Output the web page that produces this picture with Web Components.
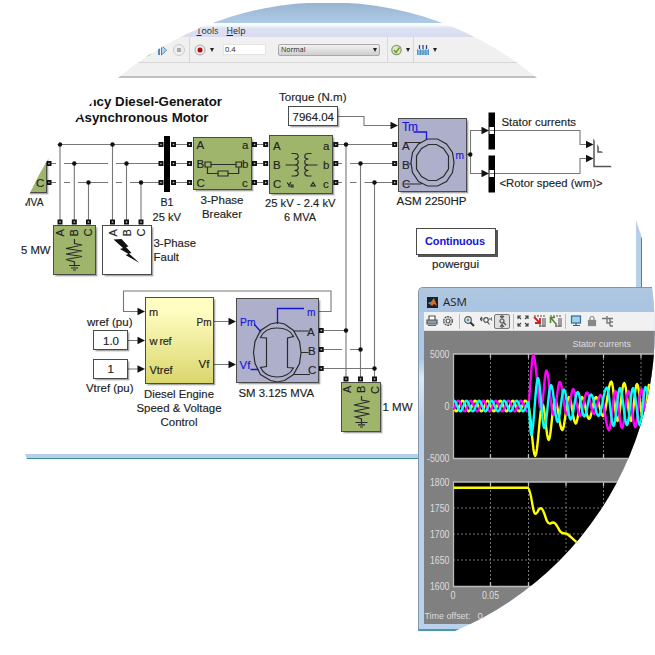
<!DOCTYPE html>
<html lang="en">
<head>
<meta charset="utf-8">
<title>Diesel-Generator model</title>
<style>
html,body{margin:0;background:#fff}
body{width:655px;height:655px;overflow:hidden;font-family:"Liberation Sans",Arial,sans-serif;color:#222}
svg text{font-family:"Liberation Sans",Arial,sans-serif;font-size:11.500px;fill:#222;stroke:#222;stroke-width:.15px}
svg .b{fill:#1616d8;stroke:#1616d8}
svg .bold{font-weight:bold;stroke:none}
svg .s{font-size:11px}
svg .ln{fill:none;stroke:#2b2b2b;stroke-width:1.2}
svg .bl{fill:none;stroke:#1616d8;stroke-width:1.3}
</style>
</head>
<body>
<round-stage>
  <model-window slot="model"></model-window>
  <model-canvas slot="canvas">
    <wire-layer></wire-layer>
    <sim-block x="0" y="132" w="45.5" h="59.5" tone="green"><svg><text x="36" y="187" textLength="7.5">C</text></svg></sim-block>
    <sim-block x="193.5" y="138" w="57" h="51" tone="green"><svg>
      <text x="196" y="149">A</text><text x="196" y="168">B</text><text x="196" y="187">C</text>
      <text x="241.5" y="149">a</text><text x="241.5" y="168">b</text><text x="241.5" y="187">c</text>
      <path class="ln" d="M204.5 162h6v5h-6zM235.5 162h5.5v5h-5.5zM210.500 164.500H235.500M207 167V173.500H217.500M227.500 173.500H238.200V167M217.500 171h10v5h-10z"/></svg></sim-block>
    <sim-block x="269.500" y="135.500" w="62" h="57" tone="green"><svg>
      <text x="272.500" y="149">A</text><text x="272.500" y="168">B</text><text x="272.500" y="187">C</text>
      <text x="322.500" y="149">a</text><text x="322.500" y="168">b</text><text x="322.500" y="187">c</text>
      <path class="ln" d="M291 153H294C299 153 299 158.500 294 158.500C299 158.500 299 164.500 294 164.500C299 164.500 299 170 294 170C299 170 299 175.500 294 175.500H291M285 164.500H294M311 153H308C303 153 303 158.500 308 158.500C303 158.500 303 164.500 308 164.500C303 164.500 303 170 308 170C303 170 303 175.500 308 175.500H311M308 164.500H317"/>
      <path class="ln" d="M286.500 182L288.500 184.500L290.500 181.500M288.500 184.500V186.500M290.500 184.500h2v2h-2zM310.500 185.300L312.600 181.800L314.700 185.300z"/></svg></sim-block>
    <sim-block x="398.500" y="118.500" w="67" h="72" tone="blue"><svg>
      <text x="401.500" y="149">A</text><text x="401.500" y="168">B</text><text x="401.500" y="187">C</text>
      <text class="b" x="401.500" y="130" textLength="16" style="font-size:12px">Tm</text><text class="b" x="455" y="158.500" textLength="8.500" lengthAdjust="spacingAndGlyphs">m</text>
      <path class="bl" d="M413 131.500H426V139.500"/>
      <path class="ln" d="M404 142H420M408 163.500H411M404 183.500H421M427 138.500H437L446 143.500L452 152L453.500 162L452 172L446 181L437 185.500H427L418 181L412 172L410.500 162L412 152L418 143.500ZM428 144H436L443 148L448 155.500V168.500L443 176L436 180H428L421 176L416 168.500V155.500L421 148Z"/></svg></sim-block>
    <sim-block x="288.500" y="106.500" w="48" h="18.500" tone="white"><svg><text x="292" y="120" textLength="41.500">7964.04</text></svg></sim-block>
    <sim-block x="417" y="229" w="78" h="25" tone="white" raised><svg><text class="b bold" x="425" y="245" textLength="60" style="font-size:11px">Continuous</text></svg></sim-block>
    <sim-block x="54" y="225.500" w="40.500" h="48" tone="green"><svg>
      <text class="s" transform="rotate(-90 64 236)" x="64" y="236">A</text><text class="s" transform="rotate(-90 78 236)" x="78" y="236">B</text><text class="s" transform="rotate(-90 92 236)" x="92" y="236">C</text>
      <path class="ln" d="M74.500 238.500V243L82 244.500L66 248L82 250.500L66 253.500L82 256L66 259L74.500 261.500V266M69 265H80M71 267.500H78M73 269.500H76"/></svg></sim-block>
    <sim-block x="102.500" y="225.500" w="48" h="48" tone="white"><svg>
      <text class="s" transform="rotate(-90 116.500 236)" x="116.500" y="236">A</text><text class="s" transform="rotate(-90 130.500 236)" x="130.500" y="236">B</text><text class="s" transform="rotate(-90 144.500 236)" x="144.500" y="236">C</text>
      <path fill="#111" d="M113 239L121 238.500L128 246L125.500 246.500L131 252.500L128.500 253L139 262.500L125 254.500L128 253.500L119.500 248.500L122.500 247.500Z"/></svg></sim-block>
    <sim-block x="341.500" y="383" w="38" h="47.500" tone="green"><svg>
      <text class="s" transform="rotate(-90 350.500 393)" x="350.500" y="393">A</text><text class="s" transform="rotate(-90 364.500 393)" x="364.500" y="393">B</text><text class="s" transform="rotate(-90 378 394)" x="378" y="394">C</text>
      <path class="ln" d="M361 396V400L369 401.500L353.500 405L369 408L353.500 411L369 414L355 417L361 419V424M355 422.500H367M357.500 424.800H364.500M359.500 427H362.500"/></svg></sim-block>
    <sim-block x="145.500" y="297.500" w="67" h="85.500" tone="yellow"><svg>
      <text class="s" x="148.500" y="315.500">m</text><text class="s" x="149" y="344" textLength="22">w ref</text><text class="s" x="149" y="373" textLength="23">Vtref</text>
      <text class="s" x="196" y="325" textLength="15" lengthAdjust="spacingAndGlyphs">Pm</text><text x="198" y="367.500" textLength="11">Vf</text></svg></sim-block>
    <sim-block x="93.500" y="331" w="33.500" h="18" tone="white"><svg><text x="102.500" y="344.500" textLength="16">1.0</text></svg></sim-block>
    <sim-block x="93.500" y="360" w="33.500" h="18" tone="white"><svg><text x="107" y="373">1</text></svg></sim-block>
    <sim-block x="236.500" y="298.500" w="81" h="83.500" tone="blue"><svg>
      <text class="b" x="239.500" y="325.500" textLength="15.500" lengthAdjust="spacingAndGlyphs">Pm</text><text class="b" x="239" y="368">Vf</text><text class="b" x="306.500" y="315.500" textLength="8.500" lengthAdjust="spacingAndGlyphs">m</text>
      <text x="306.500" y="335">A</text><text x="307.500" y="354">B</text><text x="307.500" y="373">C</text>
      <path class="bl" d="M277 323.500V308H303.500M254 324L260.500 331.500M250 369H258"/>
      <path class="ln" d="M293 330.500H308M300.500 352H308M293 374H309.500M270 323.500L277 322L284 323.500L293 330L299 341L300.500 352L299 363L293 374L284 380L277 381.500L270 380L260 374L254.500 363L253 352L254.500 341L260 330ZM260 337Q264 327.500 276.500 327.500Q289 327.500 293 336L287 337.500V367L293 367.500Q288 376.500 276.500 376.500Q264 376 260 367L266 366V337.500Z"/></svg></sim-block>
  </model-canvas>
  <scope-window slot="scope"></scope-window>
</round-stage>

<script>
function shadow(el, html){
  const t=document.createElement('template');
  t.innerHTML=html;
  el.attachShadow({mode:'open'}).append(t.content.cloneNode(true));
}
const TEXT='text{font-family:"Liberation Sans",Arial,sans-serif;font-size:11.700px;fill:#222;stroke:#222;stroke-width:.15px}';

customElements.define('round-stage', class extends HTMLElement{
  connectedCallback(){ if(this.shadowRoot) return; shadow(this,`<style>
    :host{display:grid;grid-template:655px/655px;align-items:start;justify-items:start;width:655px;height:655px;overflow:hidden;clip-path:circle(327.3px at 327.5px 329.5px);background:#fff}
    ::slotted(*){grid-area:1/1}
    </style><slot name="model"></slot><slot name="canvas"></slot><slot name="scope"></slot>`); }
});

customElements.define('drop-arrow', class extends HTMLElement{
  connectedCallback(){ if(this.shadowRoot) return; shadow(this,`<style>:host{display:block;width:0;height:0;border:2.500px solid transparent;border-top:4px solid #222;border-bottom:0}</style>`); }
});

customElements.define('model-toolbar', class extends HTMLElement{
  connectedCallback(){ if(this.shadowRoot) return; shadow(this,`<style>
    :host{display:flex;align-items:center;height:26px;box-sizing:border-box;background:#f0f0f0;border-bottom:1px solid #d6d6d6;padding-left:141px;font:8px "Open Sans",sans-serif;color:#222}
    svg{display:block;flex:none}
    i{width:1px;height:25px;background:#d8d8d8}
    .field{box-sizing:border-box;width:43px;height:11px;background:#fff;border:1px solid #e4e4e4;padding-left:1px;line-height:9px;margin-left:9px;font-size:7.500px}
    .combo{box-sizing:border-box;display:flex;align-items:center;justify-content:space-between;width:102px;height:12px;margin-left:12px;border:1px solid #aaa;border-radius:2px;background:linear-gradient(#f2f2f2,#cfcfcf);padding:0 2px;font-size:7px}
    </style>
    <svg width="48" height="20" viewBox="141 40 48 20">
      <circle cx="146" cy="50.500" r="6" fill="#5fa34b"/><rect x="158" y="45.500" width="2" height="9.500" fill="#558db8"/>
      <path d="M161.500 45.500L166.500 50.200L161.500 55Z" fill="#b5d4ed" stroke="#4c84b0"/>
      <circle cx="179" cy="50" r="5.500" fill="#eee" stroke="#ccc"/><rect x="177" y="48" width="4" height="4" fill="#aaa"/></svg>
    <i></i>
    <svg width="17" height="20" viewBox="190 40 17 20"><circle cx="200" cy="50" r="5" fill="#f5e9e9" stroke="#aaa"/><circle cx="200" cy="50" r="2.500" fill="#b00b0b"/></svg>
    <drop-arrow style="margin-left:3px"></drop-arrow>
    <div class="field">0.4</div>
    <div class="combo"><span>Normal</span><drop-arrow></drop-arrow></div>
    <i style="margin-left:7px"></i>
    <svg width="18" height="20" viewBox="388 40 18 20"><circle cx="396.500" cy="50" r="4.700" fill="#dbe9bf" stroke="#8a9a72" stroke-width="1.300"/><path d="M394 50L396 52.500L399.500 47.500" fill="none" stroke="#6d9c38" stroke-width="1.500"/></svg>
    <drop-arrow></drop-arrow><i style="margin-left:3px"></i>
    <svg width="17" height="20" viewBox="415 40 17 20"><path d="M418.500 50H429.500V55H418.500Z" fill="#7eb6e2"/><path d="M418.500 49V55M421.300 49V55M424 49V55M426.800 49V55M429.500 49V55" stroke="#3f86bd" stroke-width=".8"/><path d="M420.500 45V49M424 45V49M427.500 45V49" stroke="#234b75" stroke-width="1.300"/></svg>
    <drop-arrow style="margin-left:2px"></drop-arrow>`); }
});

customElements.define('model-window', class extends HTMLElement{
  connectedCallback(){ if(this.shadowRoot) return; shadow(this,`<style>
    :host{display:flex;flex-direction:column;box-sizing:border-box;width:640.500px;height:455.500px;margin-top:2.500px}
    .title{height:20px;flex:none;background:linear-gradient(#9ab4d0,#aecbe8)}
    .menu{height:14.500px;flex:none;display:flex;gap:8px;padding-left:174px;background:linear-gradient(#fafcff 2px,#dce2f2 5px,#d9dcf1);font:8.800px/17px "Open Sans",sans-serif;color:#222}
    .menu span{display:block;height:14px}
    u{text-underline-offset:1px}
    .strip{height:13px;flex:none;background:#f0f0f0;border-bottom:2px solid #c0c0c0}
    .page{flex:1;background:#fff;border-right:5px solid #b7cfe8;border-bottom:4px solid #b7cfe8;box-shadow:1px 1px 0 #3c8ca0}
    </style><div class="title"></div><div class="menu"><span>sis</span><span style="margin-left:4px"><u>T</u>ools</span><span><u>H</u>elp</span></div>
    <model-toolbar></model-toolbar><div class="strip"></div><div class="page"></div>`); }
});

customElements.define('model-canvas', class extends HTMLElement{
  connectedCallback(){ if(this.shadowRoot) return; shadow(this,`<style>:host{display:block;position:relative;width:655px;height:655px}</style><slot></slot>`); }
});

customElements.define('sim-block', class extends HTMLElement{
  connectedCallback(){
    if(this.shadowRoot) return;
    const [x,y,w,h]=['x','y','w','h'].map(k=>+this.getAttribute(k));
    const fill={green:'#9fb56b',blue:'#aeb0cb',white:'#fff',yellow:'linear-gradient(#fffdc2 15%,#dad66c)'}[this.getAttribute('tone')];
    shadow(this,`<style>
      :host{position:absolute;left:${x}px;top:${y}px;width:${w}px;height:${h}px;display:block;box-sizing:border-box;background:${fill};outline:1px solid #4a4a4a;outline-offset:-.5px;box-shadow:1.500px 1.500px 1.500px 1px rgba(0,0,0,.35)}
      :host([raised]){box-shadow:2px 2px 0 1px #555}
      ::slotted(svg){display:block;width:100%;height:100%;overflow:visible}
      </style><slot></slot>`);
    queueMicrotask(()=>{ const s=this.querySelector('svg'); if(s) s.setAttribute('viewBox',`${x} ${y} ${w} ${h}`); });
  }
});

customElements.define('wire-layer', class extends HTMLElement{
  connectedCallback(){
    if(this.shadowRoot) return;
    const port=(x,y)=>`<rect x="${x-2.500}" y="${y-2.500}" width="5" height="5" fill="#111"/><rect x="${x-.7}" y="${y-.7}" width="1.400" height="1.400" fill="#ccc"/>`;
    const dot=(x,y)=>`<circle cx="${x}" cy="${y}" r="2.200" fill="#111"/>`;
    const arrow=(x,y)=>`<path d="M${x-7.500} ${y-3.700}L${x} ${y}L${x-7.500} ${y+3.700}Z" fill="#111"/>`;
    const label=(x,y,w,t,c='')=>`<text class="${c}" x="${x}" y="${y}" textLength="${w}" lengthAdjust="spacingAndGlyphs">${t}</text>`;
    const A=144.5,B=163.5,C=182.5, X=[346,360.5,374.5];
    shadow(this,`<style>:host{position:absolute;inset:0;display:block}svg{display:block}${TEXT}
      .bold{font-weight:bold;stroke:none;font-size:13px;fill:#111}.w{fill:none;stroke:#777;stroke-width:1.100}</style>
    <svg width="655" height="655" viewBox="0 0 655 655">
      <path class="w" d="M55 ${A}H160M50 ${B}H56M64 ${B}H108M116 ${B}H160M50 ${C}H56M64 ${C}H70M78 ${C}H108M116 ${C}H122M130 ${C}H160
        M60 ${A}V220M74.300 ${B}V220M88.500 ${C}V220M112.500 ${A}V220M126.500 ${B}V220M141 ${C}V220
        M174 ${A}H189M174 ${B}H189M174 ${C}H189M254 ${A}H266M254 ${B}H266M254 ${C}H266
        M336 ${A}H394M336 ${B}H342M350 ${B}H394M336 ${C}H342M350 ${C}H356.500M364.500 ${C}H394
        M346 ${A}V378M360.500 ${B}V378M374.500 ${C}V378
        M321 330.500H346M321 349.500H342M350 349.500H360.500M321 368.500H374.500
        M337 116.500H364V125.500H392M466 154.500H470.500M482 130.500H470.500V173.500H482
        M495 130.500H580V144.500H588M495 173.500H580V158.500H588
        M318 311.500H331V291H123.500V311.500H138M127 340.500H138M127 369H138M213 321.500H230M213 364.500H230"/>
      ${[[49,B],[49,C],[161,A],[161,B],[161,C],[173.5,A],[173.5,B],[173.5,C],[189.5,A],[189.5,B],[189.5,C],[254.5,A],[254.5,B],[254.5,C],[265.7,A],[265.7,B],[265.7,C],[335.8,A],[335.8,B],[335.8,C],[394.7,A],[394.7,B],[394.7,C],[60,222],[74.3,222],[88.5,222],[112.500,222],[126.500,222],[141,222],[321.2,330.5],[321.2,349.5],[321.2,368.5],[346,379],[360.5,379],[374.5,379]].map(p=>port(...p)).join('')}
      ${[[60,A],[74.3,B],[88.5,C],[112.5,A],[126.5,B],[141,C],[X[0],A],[X[1],B],[X[2],C],[X[0],330.5],[X[1],349.5],[X[2],368.5],[470.3,154.5]].map(p=>dot(...p)).join('')}
      <path d="M164 136H170V192H164ZM488.500 112.500H495V149.500H488.500ZM488.500 155.500H495V192.500H488.500Z" fill="#000"/>
      <path d="M489.500 127H494V134H489.500ZM489.500 170H494V177H489.500Z" fill="#fff"/><path class="w" d="M489.500 130.500H494M489.500 173.500H494"/>
      ${[[398,125.5],[489,130.5],[489,173.5],[593.5,144.5],[593.5,158.500],[145,311.5],[145,340.5],[145,369],[236,321.5],[236,364.5]].map(p=>arrow(...p)).join('')}
      <path d="M594 137V166.500H614M598 142.500V152H604" fill="none" stroke="#555" stroke-width="1.500"/>
      ${label(88.500,106,133.500,'ncy Diesel-Generator','bold')}${label(75,121.500,133.500,'Asynchronous Motor','bold')}
      ${label(22,206,21.500,'MVA')}${label(21,254,29.500,'5 MW')}${label(153.500,247,42.500,'3-Phase')}${label(153.500,261,25.500,'Fault')}
      ${label(160.500,206,13,'B1')}${label(152.500,220.500,28.500,'25 kV')}${label(200.500,204,43,'3-Phase')}${label(202,218,40,'Breaker')}
      ${label(265,206.500,70.500,'25 kV - 2.4 kV')}${label(284,221,32,'6 MVA')}${label(279,101,67.500,'Torque (N.m)')}
      ${label(396.500,205,70,'ASM 2250HP')}${label(501.500,125.500,74.500,'Stator currents')}${label(499.500,187,103,'&lt;Rotor speed (wm)&gt;')}
      ${label(432,268,47,'powergui')}${label(87,326,45.500,'wref (pu)')}${label(86,392,47.500,'Vtref (pu)')}
      ${label(144,397.500,70,'Diesel Engine')}${label(136.500,412,85,'Speed &amp; Voltage')}${label(160.500,426,37,'Control')}
      ${label(238.500,396.500,75.500,'SM 3.125 MVA')}${label(382.500,411,30,'1 MW')}
    </svg>`);
  }
});

customElements.define('scope-toolbar', class extends HTMLElement{
  connectedCallback(){ if(this.shadowRoot) return; shadow(this,`<style>
    :host{display:flex;box-sizing:border-box;height:19px;background:#f1f1f1;align-items:center;border-bottom:1px solid #ddd}svg{display:block;flex:none;fill:none;stroke:#555;stroke-width:1.200}
    i{width:1px;height:15px;background:#bbb}.on{box-sizing:border-box;width:16px;height:15px;border:1px solid #777;border-radius:2px;background:#e0e0e0;display:grid;place-items:center;margin-left:2px}
    svg{margin-left:2px}
    </style>
    <svg width="12" height="12" viewBox="0 0 12 12"><path d="M3 5V1H9V5" fill="#fff"/><path d="M1 5H11V9H1Z" fill="#8c9eab"/><path d="M2 10.500H10" stroke="#567"/></svg>
    <svg style="margin-left:4px" width="12" height="12" viewBox="0 0 12 12"><circle cx="6" cy="6" r="4.300" stroke-width="1.400" stroke-dasharray="2 .7"/><circle cx="6" cy="6" r="2"/></svg>
    <i style="margin-left:5px"></i>
    <svg style="margin-left:3px" width="13" height="13" viewBox="0 0 13 13"><circle cx="5" cy="5" r="3.300"/><path d="M3.500 5H6.500M5 3.500V6.500" stroke="#28a"/><path d="M7.500 7.500L11 11" stroke="#333" stroke-width="2"/></svg>
    <svg style="margin-left:4px" width="12" height="12" viewBox="0 0 12 12"><circle cx="6" cy="5" r="2.300"/><path d="M7.500 7L9.500 9.500M0 4H3M0 4L2 2M0 4L2 6M9 4H12M12 2V6"/></svg>
    <div class="on"><svg style="margin:0" width="12" height="13" viewBox="0 0 12 13"><circle cx="6" cy="6" r="2"/><path d="M6 0V3M4 1L6 3L8 1M7.500 7.500L10 10M6 9V13M4 12L6 9.500L8 12"/></svg></div>
    <i style="margin-left:3px"></i>
    <svg style="margin-left:3px" width="12" height="12" viewBox="0 0 12 12"><path d="M1 4V1H4M8 1H11V4M11 8V11H8M4 11H1V8M1 1L4 4M11 1L8 4M11 11L8 8M1 11L4 8" stroke="#444"/></svg>
    <svg style="margin-left:4px" width="13" height="13" viewBox="0 0 13 13"><path d="M1 1H12" stroke-dasharray="2 1"/><path d="M10 3V12M12 3V12M6 11H12M7 8V12" stroke="#666"/><path d="M1 2L7 8M7 3V8H2" stroke="#c22" stroke-width="1.800"/></svg>
    <svg style="margin-left:3px" width="13" height="13" viewBox="0 0 13 13"><path d="M1 1H12" stroke-dasharray="2 1"/><path d="M10 3V12M12 3V12M6 11H12M7 8V12" stroke="#666"/><path d="M7 9L2 3M1.500 8V2.500H6" stroke="#583" stroke-width="1.600"/></svg>
    <i style="margin-left:3px"></i>
    <svg style="margin-left:4px" width="12" height="12" viewBox="0 0 12 12"><rect x="1.500" y="1" width="9" height="7" fill="#9cd3ee" stroke="#346c96"/><path d="M3 10.500H10M6 8V10" stroke="#555"/></svg>
    <svg style="margin-left:4px" width="12" height="12" viewBox="0 0 12 12"><path d="M4 6V3.500A2 2 0 0 1 8 3.500V6" stroke="#888"/><rect x="2.500" y="5.500" width="7" height="5" fill="#888" stroke="#888"/></svg>
    <svg style="margin-left:4px" width="12" height="12" viewBox="0 0 12 12"><path d="M0 3.500H11M5 1V8H8M8 3.500V11M8 7H11M8 11H11" stroke="#777" stroke-width="1.400"/></svg>`); }
});

customElements.define('scope-window', class extends HTMLElement{
  // Cosine easing between successive extrema gives each phase its waveform.
  wave(pts){
    let d='';
    for(let i=0;i<pts.length-1;i++){
      const [a,b]=pts[i],[c,e]=pts[i+1],n=8;
      for(let k=i?1:0;k<=n;k++){
        const t=k/n, y=b+(e-b)*(1-Math.cos(Math.PI*t))/2;
        d+=(d?'L':'M')+(a+(c-a)*t).toFixed(2)+' '+y.toFixed(2);
      }
    }
    return d;
  }
  steady(ph){ let d=''; for(let x=453.5;x<=528;x+=.7) d+=(d?'L':'M')+x.toFixed(1)+' '+(406-5.300*Math.cos((x-ph)/12.55*2*Math.PI)).toFixed(2); return d; }
  connectedCallback(){
    if(this.shadowRoot) return;
    const M=[[528,404],[533.3,355],[541,409],[546.5,370.5],[553.5,415],[559.8,382],[567,415],[573.2,389],[580,416],[587,392.500],[594,414],[600.500,395],[609,430],[615.500,391],[622,428],[628.5,391],[635.3,427],[641.3,389],[648,424],[655,390]];
    const Cy=[[528,401],[531.3,435],[538,378],[544.3,428],[551,385],[557.6,422],[564,389.5],[570.7,419.5],[577.7,392],[584.3,416.500],[591,394.5],[598.500,416],[606.8,387.5],[613.5,426],[620,388],[627,425],[633,388],[640,425.500],[645.5,387],[653,425]];
    const Y=[[528,406],[535.2,456],[542.5,404],[548.7,440],[555,400],[562.3,430],[569,397],[575.7,423.5],[582,397],[589,419],[596,397],[603,416],[611.3,381.5],[617.500,421],[624.2,383],[631,421],[637,384],[643.5,421],[649.5,384]];
    const tick=(x,y,t,w,a='end')=>`<text x="${x}" y="${y}" text-anchor="${a}" font-size="10" textLength="${w}" lengthAdjust="spacingAndGlyphs">${t}</text>`;
    const gx=[490.5,528.5,566,603.5,641];
    const grid=gx.map(x=>`M${x} 354V458M${x} 482V586`).join('')+[508,534,560].map(y=>`M453 ${y}H655`).join('');
    const nib=gx.map(x=>`M${x} 354v4M${x} 458v-4M${x} 482v4M${x} 586v-4`).join('');
    shadow(this,`<style>
      :host{display:flex;flex-direction:column;box-sizing:border-box;width:237px;height:343.500px;margin:287px 0 0 418px;border:1px solid #8497aa;border-right:0;border-bottom:2px solid #4c97ad;border-radius:5px 0 0 0;background:linear-gradient(#b5cce5,#a9c7e8 70px,#dce9f6 90px,#bad1ec 130px);overflow:hidden;padding:0 0 4px 5px}
      .title{height:24px;flex:none;display:flex;align-items:center;gap:5px;box-sizing:border-box;margin-left:-5px;padding:4px 0 0 8px;background:linear-gradient(#aec6df,#a9c4e2);font:11.500px "Open Sans",sans-serif;color:#222}
      .title span{position:relative;top:-1px}
      scope-toolbar{flex:none}
      .plots{display:block;flex:none;width:231px;height:293px;background:#808080}
      text{font-family:"Liberation Sans",Arial,sans-serif;fill:#ddd}
      .ax{fill:none;stroke:#bbb;stroke-width:1.300}.g{fill:none;stroke:#777;stroke-width:1;stroke-dasharray:2 2}.v{fill:none;stroke-width:2.400;stroke-linejoin:round}
      </style>
      <div class="title"><svg width="11" height="11" viewBox="0 0 11 11"><rect width="11" height="11" fill="#192029"/><path d="M1 6L4 5L7 1L10 9L7 7L5 9L3 7Z" fill="#e46820"/><path d="M1 6L4 5L6 2.500L4.500 7L3 7.500Z" fill="#4b95b6"/></svg><span>ASM</span></div>
      <scope-toolbar></scope-toolbar>
      <svg class="plots" viewBox="424 331 231 293">
        <path d="M453 354H655V458H453ZM453 482H655V586H453Z" fill="#000"/>
        <path class="g" d="${grid}"/><path class="ax" d="${nib}"/>
        <path class="ax" d="M655 354H453.500V458.500H655M655 482H453.500V586.500H655"/>
        <path class="v" stroke="#ffff00" d="${this.steady(450)}${this.wave(Y)}"/>
        <path class="v" stroke="#ff00ff" d="${this.steady(458.2)}${this.wave(M)}"/>
        <path class="v" stroke="#00ffff" d="${this.steady(454)}${this.wave(Cy)}"/>
        <path class="v" stroke="#ffff00" d="M453.500 487.700H528C530.500 489 532 504 533.500 510C535 516.500 537 513.500 538.500 510C541 506.500 542.500 508.500 544.500 514C546 519 547.500 524.500 550.500 523.500C554 521 556 523.500 558.500 528.500C560 532 562 534 566 533.500C568.500 534 572 538.500 577 542.500"/>
        ${tick(449.500,358,'5000',19.500)}${tick(449.500,410,'0',5)}${tick(449.500,462,'-5000',22.500)}
        ${tick(449.500,485.500,'1800',19.500)}${tick(449.500,511.500,'1750',19.500)}${tick(449.500,537.500,'1700',19.500)}${tick(449.500,563.500,'1650',19.500)}${tick(449.500,590,'1600',19.500)}
        ${tick(453,598.500,'0',5,'middle')}${tick(490.500,598.500,'0.05',17,'middle')}
        <text x="572.500" y="347" textLength="58.500" lengthAdjust="spacingAndGlyphs" font-size="9.500">Stator currents</text>
        <text x="424.500" y="619" textLength="46" lengthAdjust="spacingAndGlyphs" font-size="9.500">Time offset:</text><text x="477.500" y="619" font-size="9.500">0</text>
      </svg>`);
  }
});
</script>
</body>
</html>
